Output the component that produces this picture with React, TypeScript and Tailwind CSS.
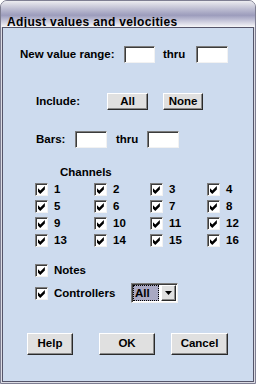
import React from 'react';

const sunken =
  'bg-white border border-t-[#7c7c7c] border-l-[#7c7c7c] border-r-[#f2f2f2] border-b-[#f2f2f2] shadow-[inset_1px_1px_0_#3c3c3c]';
const raised =
  'bg-[#e0e0e0] border border-t-white border-l-white border-r-[#2a2a2a] border-b-[#2a2a2a] shadow-[inset_-1px_-1px_0_#8a8a8a] flex items-center justify-center text-[11.5px] font-bold text-black';
const label = 'text-[11.5px] font-bold leading-[13px]';

function Check({ text }: { text?: string }) {
  return (
    <div className="flex items-center">
      <div className={`w-[13px] h-[13px] ${sunken} flex items-center justify-center`}>
        <svg width="8" height="8" viewBox="0 0 7 7" className="mt-[1px]">
          <polygon points="0,2 2,4 6,0 6,3 2,7 0,5" fill="#000" />
        </svg>
      </div>
      {text && <span className={`ml-[6px] ${label}`}>{text}</span>}
    </div>
  );
}

function Btn({ text, w }: { text: string; w: string }) {
  return <div className={`${raised} ${w}`}>{text}</div>;
}

export default function App() {
  const channels = Array.from({ length: 16 }, (_, i) => String(i + 1));

  return (
    <div className="w-[256px] h-[384px] flex flex-col bg-[#dcdce4] border border-[#7e7e92] rounded-t-[7px] overflow-hidden font-['Liberation_Sans',Arial,sans-serif] text-black">
      {/* title bar */}
      <div className="h-[26px] pl-[6px] pt-[8px] bg-[linear-gradient(to_bottom,#ececf0_0%,#bebed2_30%,#9c9cbc_55%,#c4c4d8_75%,#f6f6f8_100%)]">
        <span className="text-[12px] font-bold leading-[14px] tracking-[0.35px]">Adjust values and velocities</span>
      </div>

      {/* body */}
      <div className="flex-1 mx-[1px] mb-[1px] border border-[#55556a] bg-[#cddbee] flex flex-col">
        <div className="flex items-center mt-[18px] h-[17px] pl-[17px]">
          <span className={`w-[104px] ${label}`}>New value range:</span>
          <div className={`w-[31px] h-[17px] ${sunken}`} />
          <span className={`w-[41px] pl-[8px] ${label}`}>thru</span>
          <div className={`w-[32px] h-[17px] ${sunken}`} />
        </div>

        <div className="flex items-center mt-[30px] h-[17px] pl-[33px]">
          <span className={`w-[71px] ${label}`}>Include:</span>
          <Btn text="All" w="w-[41px] h-[17px]" />
          <div className="w-[15px]" />
          <Btn text="None" w="w-[40px] h-[17px]" />
        </div>

        <div className="flex items-center mt-[21px] h-[17px] pl-[33px]">
          <span className={`w-[39px] ${label}`}>Bars:</span>
          <div className={`w-[32px] h-[17px] ${sunken}`} />
          <span className={`w-[40px] pl-[9px] ${label}`}>thru</span>
          <div className={`w-[32px] h-[17px] ${sunken}`} />
        </div>

        <div className={`mt-[18px] pl-[57px] ${label}`}>Channels</div>

        <div className="mt-[4px] pl-[32px] grid grid-cols-[59px_56px_57px_40px] gap-y-[4px]">
          {channels.map((c) => (
            <Check key={c} text={c} />
          ))}
        </div>

        <div className="mt-[17px] pl-[32px]">
          <Check text="Notes" />
        </div>

        <div className="mt-[6px] pl-[32px] flex items-center h-[20px]">
          <div className="w-[96px]">
            <Check text="Controllers" />
          </div>
          <div className={`w-[47px] h-[20px] ${sunken} flex items-center p-[1px]`}>
            <div className={`flex-1 h-full flex items-center bg-[#a9a9c3] border border-dotted border-black pl-[1px] ${label}`}>
              All
            </div>
            <div className="w-[2px]" />
            <div className={`${raised} w-[15px] h-full`}>
              <svg width="7" height="4" viewBox="0 0 7 4">
                <polygon points="0,0 7,0 3.5,4" fill="#000" />
              </svg>
            </div>
          </div>
        </div>

        <div className="mt-[30px] pl-[24px] flex items-center">
          <Btn text="Help" w="w-[46px] h-[22px]" />
          <div className="w-[26px]" />
          <Btn text="OK" w="w-[56px] h-[22px]" />
          <div className="w-[16px]" />
          <Btn text="Cancel" w="w-[57px] h-[22px]" />
        </div>
      </div>
    </div>
  );
}
